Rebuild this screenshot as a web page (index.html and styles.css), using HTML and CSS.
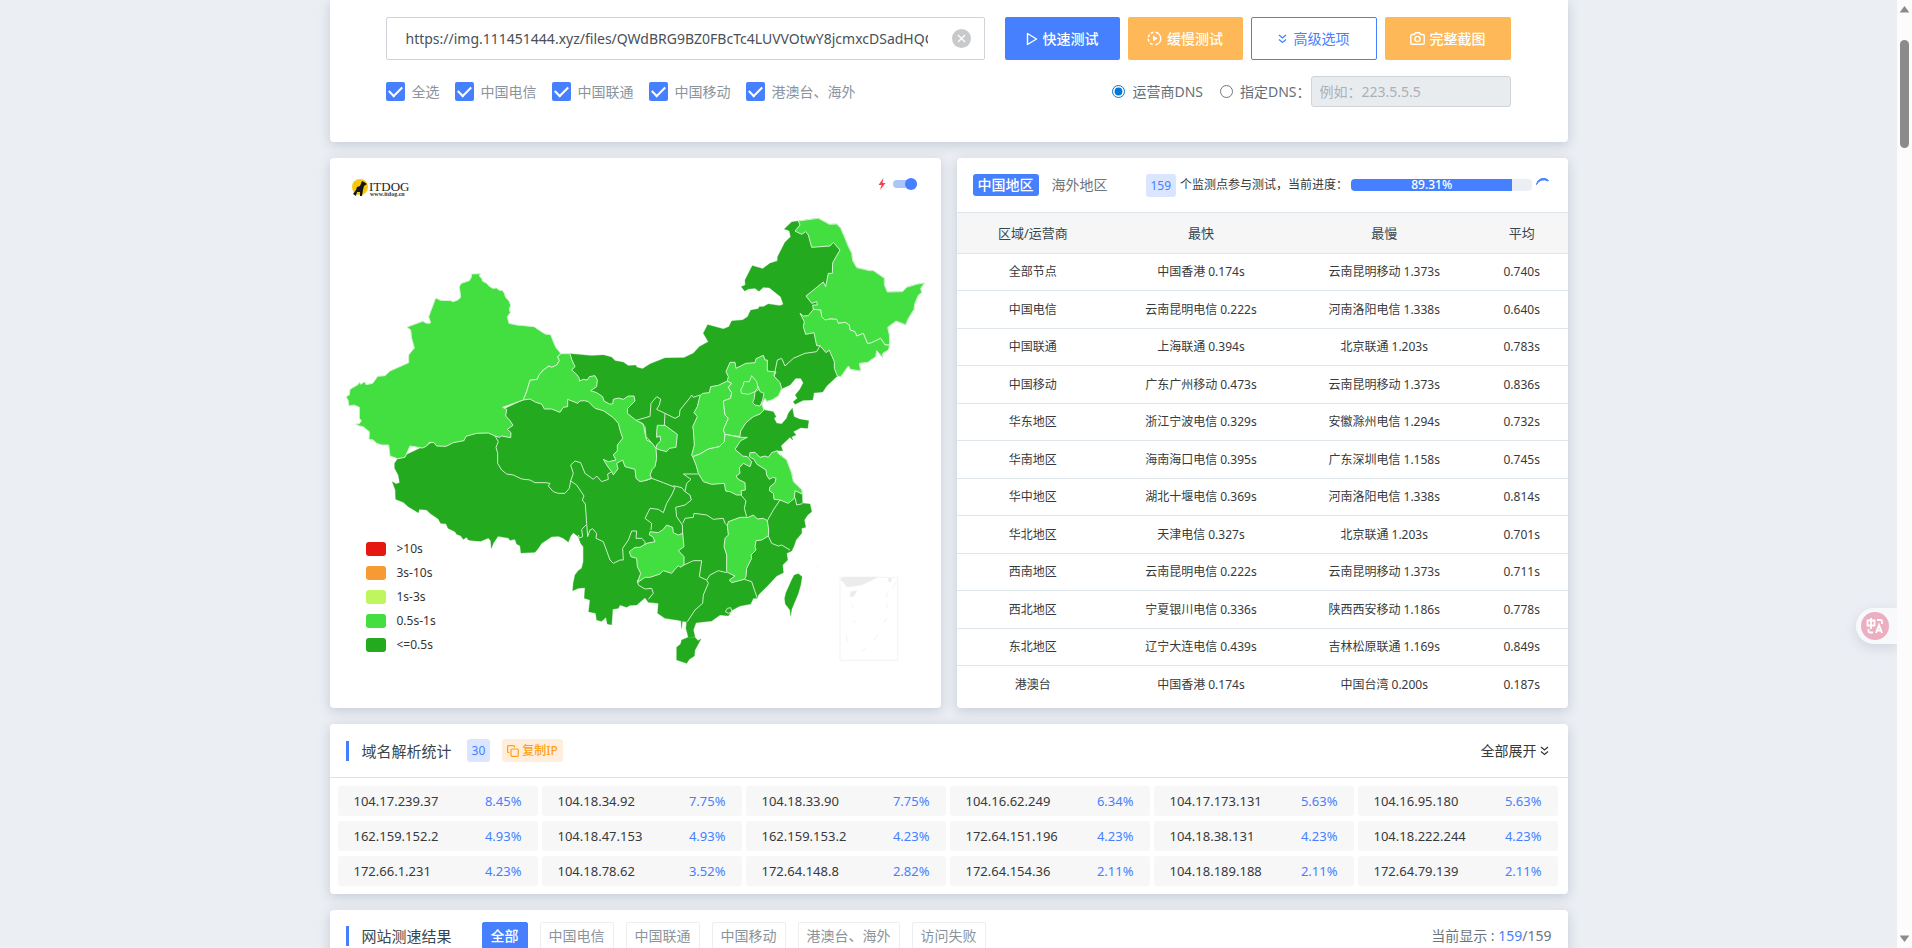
FILE: index.html
```html
<!DOCTYPE html>
<html lang="zh-CN">
<head>
<meta charset="utf-8">
<title>ITDOG 网站测速</title>
<link rel="stylesheet" href="styles.css">
</head>
<body>
<div class="window">
<main class="page">
<div class="container">

<section class="card query">
  <form class="query-row">
    <div class="url-box">
      <input class="url-input" type="text" aria-label="网址" value="https://img.111451444.xyz/files/QWdBRG9BZ0FBcTc4LUVVOtwY8jcmxcDSadHQG9">
      <button class="clear" type="button" aria-label="清空"><svg width="19" height="19" viewBox="0 0 19 19"><circle cx="9.5" cy="9.5" r="9.5" fill="#c8c9cb"/><path d="M6 6l7 7M13 6l-7 7" stroke="#fff" stroke-width="1.3"/></svg></button>
    </div>
    <button class="btn btn-blue" type="button"><svg width="12" height="14" viewBox="0 0 12 14"><path d="M1.5 1.5v11L10.500 7z" fill="none" stroke="#fff" stroke-width="1.4" stroke-linejoin="round"/></svg>快速测试</button>
    <button class="btn btn-orange" type="button"><svg width="15" height="15" viewBox="0 0 15 15"><path d="M8.500 1.200a6.400 6.400 0 0 1 0 12.600" fill="none" stroke="#fff" stroke-width="1.500"/><path d="M6.500 1.200a6.400 6.400 0 0 0 0 12.600" fill="none" stroke="#fff" stroke-width="1.500" stroke-dasharray="3 1.500"/><path d="M6 4.500v6L10.500 7.500z" fill="#fff"/></svg>缓慢测试</button>
    <button class="btn btn-line" type="button"><svg width="9" height="10" viewBox="0 0 9 10"><path d="M1 1l3.500 3L8 1M1 5.500l3.500 3L8 5.500" fill="none" stroke="currentColor" stroke-width="1.300"/></svg>高级选项</button>
    <button class="btn btn-orange btn-wide" type="button"><svg width="15" height="13" viewBox="0 0 15 13"><path d="M2 2.500h2.500l1-1.700h4l1 1.700H13a1.200 1.200 0 0 1 1.200 1.200v7.300a1.200 1.200 0 0 1-1.200 1.200H2A1.200 1.200 0 0 1 .8 11V3.700A1.200 1.200 0 0 1 2 2.500z" fill="none" stroke="#fff" stroke-width="1.400"/><circle cx="7.500" cy="7" r="2.600" fill="none" stroke="#fff" stroke-width="1.400"/></svg>完整截图</button>
  </form>
  <div class="option-row">
    <div class="checks">
      <label><input type="checkbox" checked>全选</label>
      <label><input type="checkbox" checked>中国电信</label>
      <label><input type="checkbox" checked>中国联通</label>
      <label><input type="checkbox" checked>中国移动</label>
      <label><input type="checkbox" checked>港澳台、海外</label>
    </div>
    <div class="dns">
      <label><input type="radio" name="dns" checked>运营商DNS</label>
      <label><input type="radio" name="dns">指定DNS：</label>
      <input class="dns-input" type="text" aria-label="指定DNS" placeholder="例如：223.5.5.5" disabled>
    </div>
  </div>
</section>

<div class="columns">
<section class="card map-card">
  <svg class="map" viewBox="0 -126 1833 1650" role="img" aria-label="中国地图">
    <g class="fast">
      <path d="M203 776L194 790 194 805 205 825 209 848 198 852 187 845 196 870 197 898 220 907 235 920 265 938 268 928 290 930 300 940 325 957 332 970 348 971 354 985 375 995 380 1003 392 1007 400 1018 410 1012 415 1020 430 1022 452 1024 475 1014 482 1022 484 1045 490 1030 504 1009 535 1014 540 1021 555 1018 560 1032 570 1037 573 1059 615 1057 625 1045 635 1030 665 1010 685 1009 700 1015 715 1026 722 1008 730 998 745 1010 752 1030 760 1040 760 1085 755 1105 745 1112 735 1125 730 1150 728 1172 745 1165 765 1163 763 1195 780 1200 776 1235 797 1240 800 1260 815 1264 828 1252 832 1272 845 1274 848 1228 865 1225 870 1215 890 1222 900 1216 920 1215 945 1193 955 1207 985 1210 983 1240 1005 1255 1040 1260 1053 1262 1055 1285 1057 1264 1070 1265 1068 1285 1075 1312 1095 1310 1090 1290 1098 1268 1145 1263 1170 1245 1195 1247 1207 1230 1230 1218 1262 1212 1270 1195 1282 1195 1285 1185 1310 1160 1340 1128 1360 1118 1358 1095 1373 1080 1370 1060 1385 1053 1392 1038 1398 1020 1415 1000 1415 985 1427 982 1423 960 1433 945 1445 935 1440 912 1417 910 1416 870 1405 860 1390 845 1385 820 1370 780 1342 757 1340 752 1358 752 1353 737 1380 712 1388 720 1385 710 1398 705 1390 695 1412 683 1433 685 1436 662 1410 658 1392 650 1387 625 1375 640 1370 655 1355 672 1340 670 1332 655 1338 650 1330 635 1302 630 1295 612 1305 595 1310 604 1325 600 1345 588 1355 566 1380 555 1397 535 1412 535 1420 548 1410 568 1396 585 1402 595 1390 605 1395 613 1420 601 1448 600 1452 578 1478 576 1490 558 1522 528 1532 530 1555 498 1562 508 1592 513 1588 490 1613 487 1637 470 1640 452 1658 472 1658 460 1675 450 1679 435 1678 405 1673 382 1698 363 1727 374 1735 355 1752 328 1754 312 1765 285 1775 278 1772 265 1783 249 1760 253 1730 262 1718 275 1672 276 1663 255 1663 235 1630 212 1618 212 1580 203 1568 182 1565 160 1555 140 1543 110 1532 85 1520 72 1498 73 1465 55 1405 63 1385 66 1363 87 1378 92 1382 110 1365 127 1343 170 1342 183 1320 190 1298 206 1267 197 1245 240 1246 255 1234 260 1244 273 1255 267 1275 265 1287 274 1300 262 1318 263 1352 290 1360 313 1350 317 1315 312 1300 320 1288 320 1285 326 1262 331 1253 350 1238 360 1205 363 1197 380 1180 387 1133 374 1120 400 1135 425 1108 440 1090 460 1062 473 1005 474 960 492 938 506 920 502 918 496 895 497 880 487 855 482 845 472 820 465 785 467 720 461 580 600z"/>
      <path d="M1055 1320L1075 1312 1095 1312 1104 1322 1113 1317 1095 1350 1093 1368 1078 1378 1070 1390 1040 1380 1040 1342 1052 1332z"/>
      <path d="M1405 1121L1416 1130 1412 1155 1405 1180 1385 1228 1382 1247 1380 1230 1366 1212 1364 1195 1368 1178 1385 1140 1393 1125z"/>
    </g>
    <g class="medium">
      <path d="M424 222L451 221 448 228 456 236 457 243 470 250 478 259 488 265 500 264 506 270 518 272 523 280 527 292 537 303 542 316 538 328 541 338 532 350 537 370 560 375 612 380 645 402 662 404 670 425 678 443 693 461 683 470 688 482 680 495 665 502 657 498 640 510 627 525 622 538 600 541 590 575 580 600 518 622 530 628 527 648 540 662 549 676 532 688 543 698 542 713 515 708 508 712 495 708 475 699 440 700 408 709 402 722 370 728 348 739 320 738 312 728 298 727 290 738 278 744 240 738 225 772 203 776 180 768 176 735 155 735 140 730 130 720 117 718 118 695 105 685 100 680 88 678 76 672 88 671 94 662 88 655 88 622 72 615 57 618 54 600 48 590 58 585 60 568 85 553 88 546 92 553 104 545 108 554 128 550 143 529 165 527 180 513 236 488 236 465 246 452 253 444 245 415 242 390 231 381 278 364 290 370 302 369 296 350 317 294 332 301 362 302 370 305 385 299 392 292 388 260 394 250 418 242 424 232z"/>
      <path d="M693 461L720 461 725 478 735 500 725 510 740 523 748 535 748 543 760 538 772 540 778 530 795 527 802 540 800 560 782 572 800 578 818 590 822 603 838 612 848 612 850 598 865 594 880 598 895 588 912 588 915 603 893 625 892 640 918 661 940 672 945 700 950 720 965 728 978 745 980 775 975 800 967 808 960 825 965 835 945 842 930 845 918 835 915 808 885 800 878 780 860 790 864 806 850 825 845 815 832 798 820 778 835 785 858 780 850 765 862 752 862 735 878 715 870 690 865 670 850 653 820 632 795 625 775 605 763 602 750 603 743 610 713 598 713 620 700 622 690 637 665 627 643 627 635 612 617 607 600 597 580 600 590 575 600 541 622 538 627 525 640 510 657 498 665 502 680 495 688 482 683 470z"/>
      <path d="M982 676L1005 676 1042 703 1038 742 1018 745 1010 755 990 750 978 745 980 735 992 722 990 708 980 712 980 695z"/>
      <path d="M1110 587L1118 580 1138 578 1142 560 1165 556 1192 543 1205 550 1195 562 1205 578 1202 595 1180 603 1185 645 1195 655 1180 690 1185 703 1183 725 1168 740 1135 747 1110 762 1088 770 1085 765 1093 735 1090 690 1088 680 1102 650 1092 638 1102 620z"/>
      <path d="M1192 543L1195 530 1188 515 1200 487 1215 487 1218 505 1248 490 1275 488 1278 476 1300 466 1305 480 1312 480 1312 513 1338 516 1332 528 1350 548 1355 566 1345 588 1325 600 1310 604 1305 595 1295 612 1302 630 1290 642 1270 650 1248 668 1232 693 1230 710 1185 703 1180 690 1195 655 1185 645 1180 603 1202 595 1205 578 1195 562 1205 550z"/>
      <path d="M1185 703L1230 712 1252 712 1232 722 1215 748 1238 768 1252 770 1265 785 1260 800 1240 790 1228 803 1230 820 1218 828 1225 838 1245 848 1246 870 1233 872 1235 885 1220 885 1200 875 1187 873 1183 850 1145 853 1120 845 1105 820 1098 795 1088 770 1110 762 1135 747 1168 740 1183 725z"/>
      <path d="M1260 758L1275 757 1290 772 1305 768 1315 772 1325 758 1342 752 1344 760 1370 780 1385 820 1390 845 1405 860 1416 870 1416 882 1395 872 1393 895 1375 910 1350 900 1332 898 1330 880 1318 872 1320 860 1335 848 1338 835 1328 832 1318 838 1310 825 1308 810 1280 792 1272 778 1258 770z"/>
      <path d="M1192 977L1195 965 1230 952 1255 952 1270 945 1282 957 1300 955 1312 962 1316 990 1315 1008 1295 1020 1278 1022 1275 1040 1278 1050 1263 1065 1265 1075 1250 1105 1248 1130 1243 1138 1205 1148 1198 1140 1215 1128 1198 1120 1190 1115 1190 1065 1182 1040 1185 1015 1195 1005z"/>
      <path d="M930 1042L950 1030 975 1025 968 1010 958 1005 960 995 985 998 1000 988 1010 975 1028 982 1030 998 1045 1005 1058 1000 1062 1040 1045 1052 1062 1070 1062 1095 1050 1102 1045 1097 1035 1108 1025 1120 1000 1112 990 1122 960 1132 945 1132 922 1148 932 1120 922 1100 920 1075 903 1070 898 1055 915 1042z"/>
      <path d="M1405 63L1465 55 1498 73 1520 72 1532 85 1543 110 1555 140 1565 160 1568 182 1580 203 1618 212 1630 212 1663 235 1663 255 1672 276 1718 275 1730 262 1760 253 1783 249 1772 265 1775 278 1765 285 1754 312 1752 328 1735 355 1727 374 1698 363 1673 382 1678 405 1679 435 1665 435 1652 415 1642 420 1620 430 1612 430 1600 400 1580 408 1575 395 1560 390 1558 375 1545 367 1525 370 1520 358 1500 357 1485 360 1475 350 1472 330 1450 328 1448 315 1462 315 1460 305 1445 310 1428 288 1480 246 1487 260 1495 220 1507 220 1508 188 1530 150 1510 127 1500 138 1445 142 1435 105 1427 95 1415 103 1395 93 1410 75z"/>
      <path d="M1450 328L1472 330 1475 350 1485 360 1500 357 1520 358 1525 370 1545 367 1558 375 1560 390 1575 395 1580 408 1600 400 1612 430 1620 430 1642 420 1652 415 1665 435 1679 435 1675 450 1658 460 1658 472 1640 452 1637 470 1613 487 1588 490 1592 513 1562 508 1555 498 1532 530 1522 528 1513 505 1513 485 1502 460 1498 450 1488 458 1470 437 1460 437 1452 398 1427 403 1420 380 1423 365 1410 340 1420 348 1435 347z"/>
    </g>
    <path class="fast border" d="M1275 575L1285 560 1290 575 1302 580 1298 600 1290 618 1275 615 1268 608 1273 595z"/>
    <g class="border" fill="none">
      <path d="M495 708L505 725 498 742 503 760 503 790 515 810 530 822 550 825 575 837 600 840 615 848 645 848 660 850 655 858 670 875 685 880 705 880 718 865 722 843 730 820 722 795 735 783 752 788 765 820 790 838 800 828 815 845 835 838 833 822 845 815"/>
      <path d="M722 843L740 855 762 888 757 900 766 912 770 970 773 1010 780 990 788 986 800 1000 798 1015 820 1025 840 1080 850 1090 870 1080 880 1080 878 1045 895 1020 905 993 920 993 918 1015 935 1015 945 1025 945 1035"/>
      <path d="M745 1005L748 1014 758 1010 755 988 768 975"/>
      <path d="M922 1140L925 1155 945 1167 965 1165 970 1180 955 1198"/>
      <path d="M945 842L965 835 1000 848 1035 862 1025 885 1010 910 1000 938 985 928 960 925 945 955 965 970 963 990"/>
      <path d="M1030 857L1055 863 1065 875 1080 885 1084 900 1065 915 1037 922 1040 950 1057 975 1058 1003"/>
      <path d="M1065 875L1070 850 1083 838 1060 822 1105 822"/>
      <path d="M1233 885L1248 903 1243 925 1250 950M1058 970L1065 955 1090 952 1092 940 1130 945 1150 958 1180 955 1185 970 1192 977"/>
      <path d="M1062 1095L1090 1082 1115 1082 1108 1130 1130 1140 1140 1125 1165 1112 1190 1118M1130 1140L1135 1150 1120 1185 1118 1210 1095 1230 1072 1265"/>
      <path d="M1243 1138L1265 1145 1275 1175 1282 1195M1315 1008L1325 1030 1345 1038 1355 1035 1380 1050M1350 900L1330 930 1312 962"/>
      <path d="M918 661L960 649 963 610 980 590 992 597 988 615 980 628 1005 640 1003 676M1005 640L1035 655 1048 648 1050 630 1080 593 1085 585 1090 592 1110 585M930 665L945 680 948 710 965 728"/>
      <path d="M1332 528L1342 480 1355 475 1365 498 1390 475 1425 460 1460 455 1470 437M1395 893L1400 915 1417 911"/>
      <path d="M1232 570L1235 580 1255 583 1275 575 1285 570 1280 545 1265 527 1258 545 1242 545 1240 555zM1186 1235L1192 1225 1202 1223 1206 1235 1195 1240z"/>
    </g>
    <g class="sea">
      <rect x="1530" y="1132" width="173" height="249" fill="none" stroke="#f3f3f3" stroke-width="3"/>
      <path d="M1532 1138L1540 1132 1642 1132 1595 1155 1552 1161zM1562 1176l18-4-8 16-12 2zM1674 1136l12 0-6 12zM1698 1147l-9 18M1672 1176l-4 18M1670 1209v16M1670 1255l-9 14M1566 1215l3 10M1576 1260l-7 9M1549 1305l4 20M1643 1304l-12 18M1608 1346l-13 6M1462 1100l6-3" stroke="#ececec" stroke-width="2"/>
    </g>
  </svg>
  <header class="map-head">
    <svg class="logo" width="64" height="20" viewBox="0 0 64 20" role="img" aria-label="ITDOG"><circle cx="9" cy="9" r="8" fill="#f7c80c"/><path d="M2 16l3-4 1-3 3-1 2-5 2 1 3 2-3 2-1 4-1 6-2 0 0-4-3 0-1 4z" fill="#161616"/><text class="logo-name" x="18" y="13">ITDOG</text><text class="logo-site" x="19" y="18">www.itdog.cn</text></svg>
    <label class="switch"><svg width="8" height="12" viewBox="0 0 8 12"><path d="M5.500 0L.5 7h3L2 12l5.500-7H4.500z" fill="#f5414f"/></svg><input type="checkbox" checked aria-label="快速模式"></label>
  </header>
  <ul class="legend">
    <li><i class="swatch red"></i>&gt;10s</li>
    <li><i class="swatch orange"></i>3s-10s</li>
    <li><i class="swatch lime"></i>1s-3s</li>
    <li><i class="swatch light"></i>0.5s-1s</li>
    <li><i class="swatch dark"></i>&lt;=0.5s</li>
  </ul>
</section>

<section class="card stats">
  <header class="stats-head">
    <button class="tab active" type="button">中国地区</button>
    <button class="tab" type="button">海外地区</button>
    <span class="badge">159</span>
    <span class="progress-label">个监测点参与测试，当前进度：</span>
    <div class="progress" role="progressbar" aria-valuenow="89.31"><div class="progress-fill" style="width:89.31%">89.31%</div></div>
    <svg class="spinner" width="14" height="14" viewBox="0 0 14 14"><path d="M0.500 6.500A7 7 0 0 1 12.500 2.500L12 3A8 8 0 0 0 0.500 6.500z" fill="#4680ff" stroke="#4680ff"/></svg>
  </header>
  <table>
    <colgroup><col class="c-area"><col class="c-time"><col class="c-time"><col class="c-avg"></colgroup>
    <thead><tr><th>区域/运营商</th><th>最快</th><th>最慢</th><th>平均</th></tr></thead>
    <tbody>
      <tr><td>全部节点</td><td>中国香港 0.174s</td><td>云南昆明移动 1.373s</td><td>0.740s</td></tr>
      <tr><td>中国电信</td><td>云南昆明电信 0.222s</td><td>河南洛阳电信 1.338s</td><td>0.640s</td></tr>
      <tr><td>中国联通</td><td>上海联通 0.394s</td><td>北京联通 1.203s</td><td>0.783s</td></tr>
      <tr><td>中国移动</td><td>广东广州移动 0.473s</td><td>云南昆明移动 1.373s</td><td>0.836s</td></tr>
      <tr><td>华东地区</td><td>浙江宁波电信 0.329s</td><td>安徽滁州电信 1.294s</td><td>0.732s</td></tr>
      <tr><td>华南地区</td><td>海南海口电信 0.395s</td><td>广东深圳电信 1.158s</td><td>0.745s</td></tr>
      <tr><td>华中地区</td><td>湖北十堰电信 0.369s</td><td>河南洛阳电信 1.338s</td><td>0.814s</td></tr>
      <tr><td>华北地区</td><td>天津电信 0.327s</td><td>北京联通 1.203s</td><td>0.701s</td></tr>
      <tr><td>西南地区</td><td>云南昆明电信 0.222s</td><td>云南昆明移动 1.373s</td><td>0.711s</td></tr>
      <tr><td>西北地区</td><td>宁夏银川电信 0.336s</td><td>陕西西安移动 1.186s</td><td>0.778s</td></tr>
      <tr><td>东北地区</td><td>辽宁大连电信 0.439s</td><td>吉林松原联通 1.169s</td><td>0.849s</td></tr>
      <tr><td>港澳台</td><td>中国香港 0.174s</td><td>中国台湾 0.200s</td><td>0.187s</td></tr>
    </tbody>
  </table>
</section>
</div>

<section class="card domains">
  <header class="section-head">
    <h2>域名解析统计</h2>
    <span class="badge count">30</span>
    <button class="copy" type="button"><svg width="12" height="12" viewBox="0 0 12 12"><rect x="4" y="4" width="7.300" height="7.300" rx="1" fill="none" stroke="currentColor" stroke-width="1.200"/><path d="M2.500 7.500H1.600a1 1 0 0 1-1-1V1.600a1 1 0 0 1 1-1h4.900a1 1 0 0 1 1 1V2.500" fill="none" stroke="currentColor" stroke-width="1.200"/></svg>复制IP</button>
    <button class="expand" type="button">全部展开<svg width="9" height="10" viewBox="0 0 9 10"><path d="M1 1l3.500 3L8 1M1 5.500l3.500 3L8 5.500" fill="none" stroke="currentColor" stroke-width="1.300"/></svg></button>
  </header>
  <ul class="ips">
    <li><span>104.17.239.37</span><b>8.45%</b></li>
    <li><span>104.18.34.92</span><b>7.75%</b></li>
    <li><span>104.18.33.90</span><b>7.75%</b></li>
    <li><span>104.16.62.249</span><b>6.34%</b></li>
    <li><span>104.17.173.131</span><b>5.63%</b></li>
    <li><span>104.16.95.180</span><b>5.63%</b></li>
    <li><span>162.159.152.2</span><b>4.93%</b></li>
    <li><span>104.18.47.153</span><b>4.93%</b></li>
    <li><span>162.159.153.2</span><b>4.23%</b></li>
    <li><span>172.64.151.196</span><b>4.23%</b></li>
    <li><span>104.18.38.131</span><b>4.23%</b></li>
    <li><span>104.18.222.244</span><b>4.23%</b></li>
    <li><span>172.66.1.231</span><b>4.23%</b></li>
    <li><span>104.18.78.62</span><b>3.52%</b></li>
    <li><span>172.64.148.8</span><b>2.82%</b></li>
    <li><span>172.64.154.36</span><b>2.11%</b></li>
    <li><span>104.18.189.188</span><b>2.11%</b></li>
    <li><span>172.64.79.139</span><b>2.11%</b></li>
  </ul>
</section>

<section class="card results">
  <header class="section-head">
    <h2>网站测速结果</h2>
    <div class="filters">
      <button class="filter active" type="button">全部</button>
      <button class="filter" type="button">中国电信</button>
      <button class="filter" type="button">中国联通</button>
      <button class="filter" type="button">中国移动</button>
      <button class="filter" type="button">港澳台、海外</button>
      <button class="filter" type="button">访问失败</button>
    </div>
    <p class="showing">当前显示 : <span>159</span>/159</p>
  </header>
</section>

</div>
<button class="translate" type="button" aria-label="翻译"><svg width="28" height="28" viewBox="0 0 28 28"><circle cx="14" cy="14" r="14" fill="#ecafc2"/><g fill="none" stroke="#fff" stroke-width="1.800"><path d="M6.500 8.500h7v5h-7zM10 6v11M16 8h3.500q1.500 0 1.500 1.500V12M7.500 17v2q0 1.500 1.500 1.500h3M15 21l3-8 3 8M16 18.500h4"/></g></svg></button>
</main>
<div class="scrollbar" aria-hidden="true">
  <svg width="9" height="7" viewBox="0 0 9 7"><path d="M4.500 0L9 6v.5H0V6z" fill="#8b8b8b"/></svg>
  <div class="track"><div class="thumb"></div></div>
  <svg width="9" height="7" viewBox="0 0 9 7"><path d="M4.500 7L9 1V.5H0V1z" fill="#8b8b8b"/></svg>
</div>
</div>
</body>
</html>
```
FILE: styles.css
```css
* { box-sizing: border-box; }
body {
  margin: 0;
  background: #ebeef3;
  color: #373a3c;
  font: 14px/20px "Noto Sans", "Noto Sans CJK SC", sans-serif;
}
button, input { font: inherit; color: inherit; margin: 0; }
button { border: 0; background: none; padding: 0; white-space: nowrap; }
ul, h2, p { margin: 0; padding: 0; list-style: none; font-weight: 400; }
svg { flex: none; }

.window { display: flex; height: 100vh; overflow: hidden; }
.page { flex: 1; overflow: hidden; position: relative; }
.container { max-width: 1238px; margin: 0 auto; display: flex; flex-direction: column; gap: 16px; }
.card { background: #fff; border-radius: 4px; box-shadow: 0 3px 12px rgba(62, 85, 115, .22); }

/* query form */
.query { padding: 17px 57px 35px 56px; border-radius: 0 0 4px 4px; }
.query-row { display: flex; gap: 8px; }
.url-box { flex: 1; display: flex; align-items: center; gap: 24px; height: 43px; margin-right: 12px; padding: 0 13px 0 19px; border: 1px solid #ced4da; border-radius: 2px; }
.url-input { flex: 1; min-width: 0; padding: 0; border: 0; outline: 0; background: none; font-size: 14px; color: #495057; }
.clear { display: flex; }
.btn { width: 115px; height: 43px; display: flex; align-items: center; justify-content: center; gap: 5px; border-radius: 2px; color: #fff; font-weight: 500; }
.btn-blue { background: #4680ff; }
.btn-orange { background: #ffb858; }
.btn-line { width: 126px; gap: 7px; border: 1px solid #4680ff; color: #4680ff; font-weight: 400; }
.btn-wide { width: 126px; }
.option-row { display: flex; justify-content: space-between; align-items: center; margin-top: 16px; }
.checks { display: flex; gap: 15px; color: #8b949c; }
.checks label, .dns label { display: flex; align-items: center; gap: 7px; }
.checks input { appearance: none; width: 19px; height: 19px; border-radius: 2px; background: #4680ff; display: grid; place-items: center; }
.checks input::after { content: ""; width: 11px; height: 6px; border: solid #fff; border-width: 0 0 2px 2px; transform: translateY(-2px) rotate(-45deg); }
.dns { display: flex; align-items: center; color: #666f78; }
.dns label { margin-right: 17px; }
.dns label + label { margin-right: 0; }
.dns input[type="radio"] { width: 13px; height: 13px; accent-color: #0078d7; }
.dns-input { width: 200px; height: 31px; padding: 0 8px; border: 1px solid #ced4da; border-radius: 3px; background: #e9ecef; }
.dns-input::placeholder { color: #a9b0b7; }

/* map and statistics */
.columns { display: grid; grid-template-columns: 1fr 1fr; gap: 16px; }
.map-card { position: relative; }
.map { display: block; width: 100%; height: 100%; }
.fast { fill: #23aa1e; stroke: #23aa1e; stroke-width: 1; }
.medium { fill: #43df40; stroke: #d5f2d2; stroke-width: 3; stroke-linejoin: round; }
.border { stroke: #cdeecb; stroke-width: 3; stroke-linejoin: round; }
.sea { fill: #ececec; }
.map-head { position: absolute; top: 20px; left: 21px; right: 24px; display: flex; justify-content: space-between; }
.logo-name { font: 13px "Liberation Serif", serif; fill: #222; }
.logo-site { font: 700 6px "Liberation Serif", serif; fill: #333; }
.switch { display: flex; align-items: center; gap: 7px; height: 12px; }
.switch input { appearance: none; width: 24px; height: 8px; border-radius: 4px; background: #a9c5fb; display: flex; align-items: center; justify-content: flex-end; }
.switch input::after { content: ""; width: 12px; height: 12px; border-radius: 50%; background: #4680ff; }
.legend { position: absolute; left: 36px; bottom: 51px; font-size: 12px; line-height: 24px; color: #333; }
.legend li { display: flex; align-items: center; gap: 11px; }
.swatch { width: 20px; height: 14px; border-radius: 3px; }
.red { background: #e61610; }
.orange { background: #f79a34; }
.lime { background: #bff660; }
.light { background: #43df40; }
.dark { background: #23aa1e; }

.stats { padding-bottom: 4px; }
.stats-head { display: flex; align-items: center; height: 54px; padding: 0 18px 0 16px; }
.tab { height: 22px; padding: 0 5px; margin-right: 8px; border-radius: 3px; color: #6c757d; }
.tab.active { background: #4680ff; color: #fff; font-weight: 500; }
.badge { height: 23px; padding: 0 5px; border-radius: 3px; background: #dae6ff; color: #4680ff; font-size: 12px; line-height: 23px; }
.stats-head .badge { margin-left: 25px; }
.progress-label { margin: 0 3px 0 4px; font-size: 12px; white-space: nowrap; }
.progress { flex: 1; height: 12px; border-radius: 4px; background: #ebeff4; }
.progress-fill { display: flex; align-items: center; justify-content: center; height: 12px; border-radius: 4px 0 0 4px; background: #4680ff; color: #fff; font-size: 12px; font-weight: 500; line-height: 18px; }
.spinner { margin-left: 4px; align-self: center; }
table { width: 100%; table-layout: fixed; border-collapse: collapse; text-align: center; font-size: 12px; line-height: 16px; }
.c-area { width: 25%; }
.c-time { width: 30%; }
.c-avg { width: 15%; }
th, td { padding: 0; border-top: 1px solid #dee6ec; font-weight: 400; }
th { height: 41px; background: #f6f6f6; color: #37474f; font-size: 13px; }
td { height: 37px; }
tbody tr:nth-child(even) td { height: 38px; }

/* domain statistics */
.section-head { display: flex; align-items: center; height: 54px; padding: 0 16px; }
.section-head h2 { padding-left: 13px; border-left: 3px solid #4680ff; color: #37474f; font-size: 15px; }
.domains .section-head { border-bottom: 1px solid #dfe3e6; }
.count { margin-left: 15px; }
.copy { display: flex; align-items: center; gap: 3px; height: 23px; margin-left: 12px; padding: 0 5px; border-radius: 3px; background: #ffeedb; color: #ff9f1a; font-size: 12px; font-weight: 500; }
.expand { display: flex; align-items: center; gap: 3px; margin-left: auto; padding-right: 3px; }
.ips { display: grid; grid-template-columns: repeat(6, 1fr); gap: 5px 4px; padding: 8px; padding-right: 10px; }
.ips li { display: flex; justify-content: space-between; height: 30px; padding: 0 16px; border-radius: 3px; background: #f7f7f7; font-size: 13px; line-height: 30px; }
.ips b { font-weight: 400; color: #4680ff; }

/* results */
.results .section-head { height: 60px; padding-bottom: 8px; }
.filters { display: flex; gap: 12px; margin-left: 30px; }
.filter { height: 28px; padding: 0 8px; border: 1px solid #eceef0; border-radius: 2px; color: #8b949c; }
.filter.active { border-color: #4680ff; background: #4680ff; color: #fff; font-weight: 500; }
.showing { margin-left: auto; color: #6c757d; }
.showing span { color: #4680ff; }

/* floating translate button */
.translate { position: absolute; right: 0; top: 608px; width: 41px; height: 36px; padding: 4px 5px; border-radius: 18px 0 0 18px; background: #f8f9fb; box-shadow: 0 4px 12px rgba(80, 95, 120, .16); }
.translate svg { display: block; }

.scrollbar { width: 15px; display: flex; flex-direction: column; align-items: center; padding: 6px 0; background: #fcfcfc; }
.track { flex: 1; padding-top: 27px; }
.thumb { width: 9px; height: 108px; border-radius: 5px; background: #8b8b8b; }
```
